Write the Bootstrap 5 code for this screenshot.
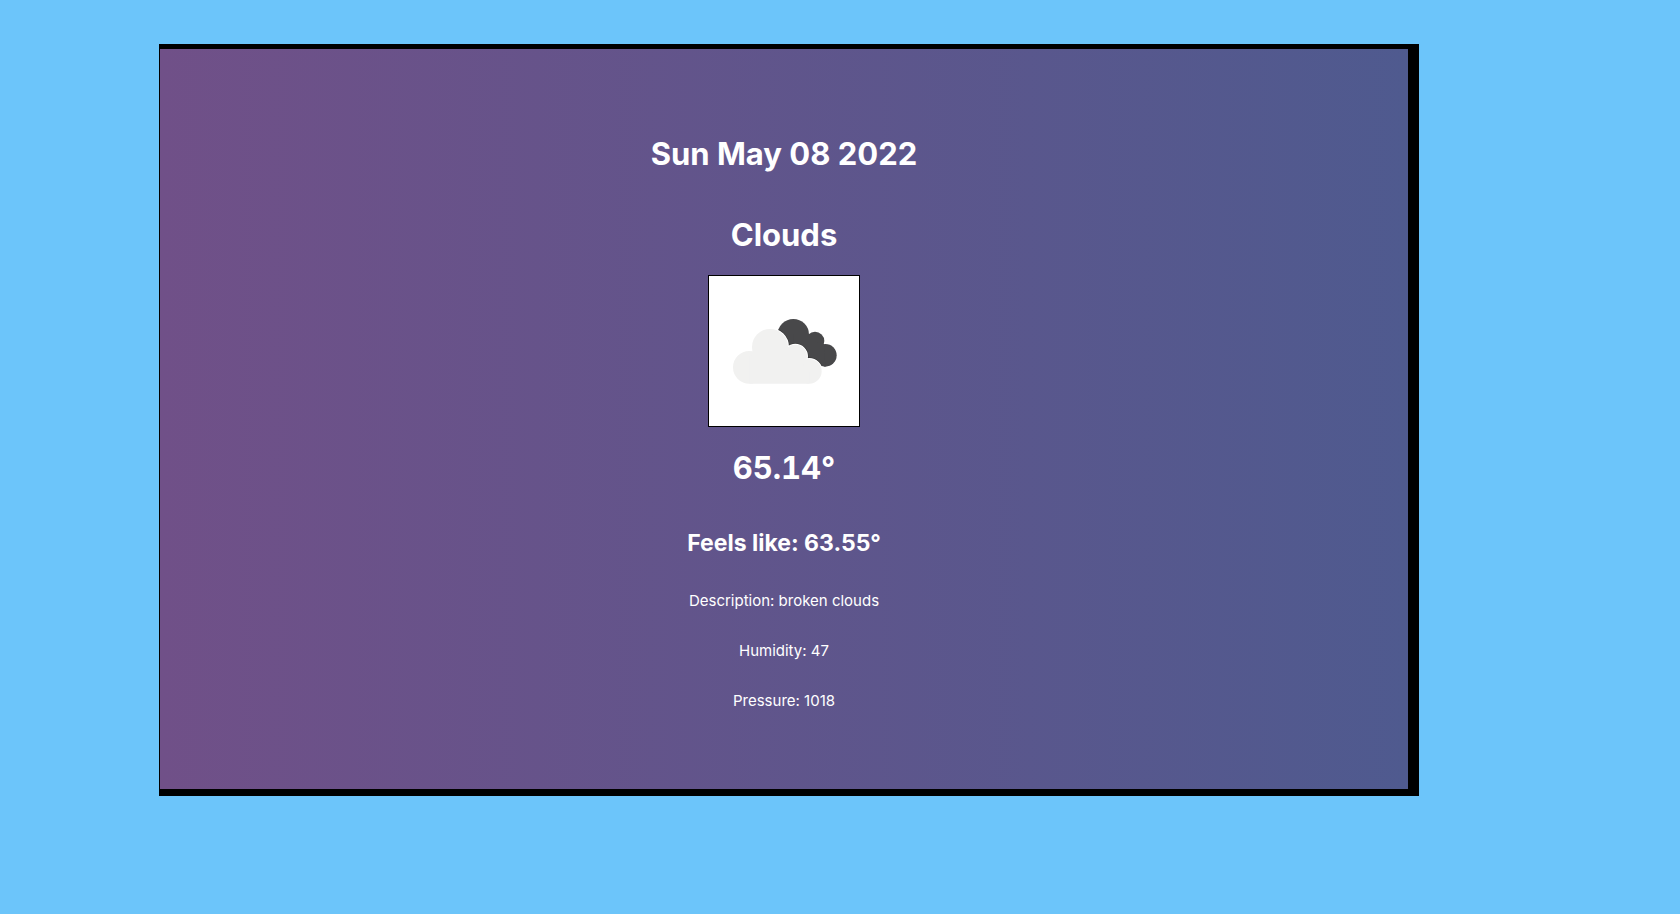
<!DOCTYPE html>
<html lang="en">
<head>
<meta charset="utf-8">
<meta name="viewport" content="width=device-width, initial-scale=1">
<title>Weather</title>
<link href="https://cdn.jsdelivr.net/npm/bootstrap@5.3.0/dist/css/bootstrap.min.css" rel="stylesheet">
<style>
  body { background: #6cc5fa; font-family: Inter, "Liberation Sans", sans-serif; }
  .weather-page { padding: 44px 0 44px 159px; }
  .weather-card {
    width: 75vw;
    padding: 85px 16px 78px;
    color: #fff;
    background: linear-gradient(to right, #705088, #4f5a8f) padding-box;
    border: solid #000;
    border-width: 5px 11px 7px 1px;
    border-radius: 0;
  }
  .weather-title { font-size: 31px; font-weight: 700; line-height: 40px; }
  .weather-date { margin-bottom: 41px; }
  .weather-kind { margin-bottom: 20px; }
  .weather-temp { margin: 21px 0 40px; font-variant-numeric: tabular-nums; }
  .weather-feels { font-size: 23px; font-weight: 700; line-height: 30px; margin-bottom: 33px; }
  .weather-details { font-size: 15px; line-height: 20px; gap: 30px; }
  .weather-icon { width: 152px; height: 152px; background: #fff; border: 1px solid #000; }
</style>
</head>
<body>
<main class="weather-page">
  <article class="weather-card card align-items-center text-center">
    <h1 class="weather-title weather-date">Sun May 08 2022</h1>
    <h2 class="weather-title weather-kind">Clouds</h2>
    <svg class="weather-icon" viewBox="0 0 450 450" role="img" aria-label="Broken clouds">
      <defs>
        <g id="front-cloud">
          <circle cx="121" cy="274" r="49"/>
          <circle cx="183" cy="213" r="54"/>
          <circle cx="259" cy="241" r="35"/>
          <circle cx="301" cy="286" r="37"/>
          <path d="M121 323V240L183 212 259 241 301 286V323Z"/>
        </g>
      </defs>
      <g fill="#48484a">
        <circle cx="253" cy="176" r="47"/>
        <circle cx="318" cy="195" r="28"/>
        <circle cx="349" cy="238" r="34"/>
        <path d="M253 174H299L318 195 345 205 349 272 253 240Z"/>
      </g>
      <use href="#front-cloud" fill="#2e2e30" stroke="#333" stroke-width="9" clip-path="url(#dark-side)"/>
      <clipPath id="dark-side">
        <circle cx="253" cy="176" r="47"/>
        <circle cx="318" cy="195" r="28"/>
        <circle cx="349" cy="238" r="34"/>
        <path d="M253 174H299L318 195 345 205 349 272 253 240Z"/>
      </clipPath>
      <use href="#front-cloud" fill="#fff" stroke="#fff" stroke-width="6"/>
      <use href="#front-cloud" fill="#f1f1f0"/>
    </svg>
    <h2 class="weather-title weather-temp">65.14°</h2>
    <h3 class="weather-feels">Feels like: 63.55°</h3>
    <div class="weather-details d-flex flex-column">
      <p class="mb-0">Description: broken clouds</p>
      <p class="mb-0">Humidity: 47</p>
      <p class="mb-0">Pressure: 1018</p>
    </div>
  </article>
</main>
<script src="https://cdn.jsdelivr.net/npm/bootstrap@5.3.0/dist/js/bootstrap.bundle.min.js"></script>
</body>
</html>
